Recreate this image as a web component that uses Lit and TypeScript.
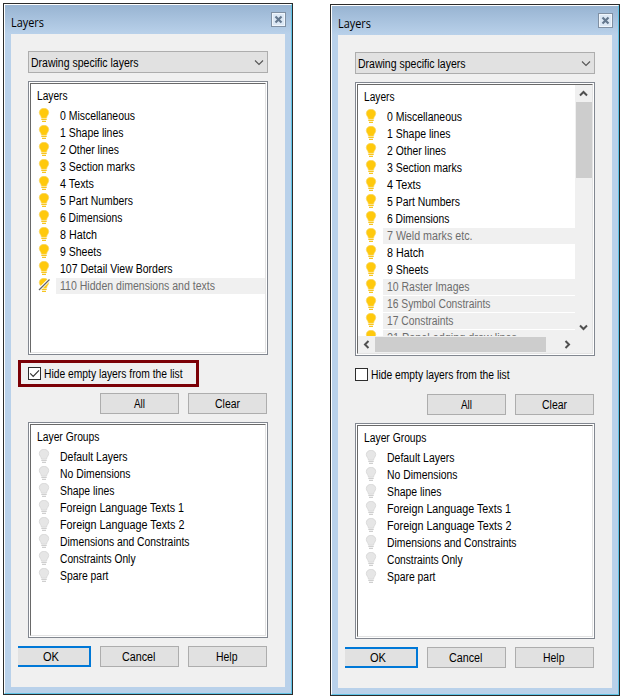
import { LitElement, html, css, svg, nothing } from "lit";
import { customElement, property } from "lit/decorators.js";

interface Row {
  label: string;
  width: number;
  empty?: boolean;
  struck?: boolean;
}

const BASE: Row[] = [
  { label: "0 Miscellaneous", width: 75 },
  { label: "1 Shape lines", width: 63.5 },
  { label: "2 Other lines", width: 59 },
  { label: "3 Section marks", width: 75 },
  { label: "4 Texts", width: 34 },
  { label: "5 Part Numbers", width: 73 },
  { label: "6 Dimensions", width: 62.5 },
];

const HATCH: Row = { label: "8 Hatch", width: 37 };
const SHEETS: Row = { label: "9 Sheets", width: 41.5 };

const FILTERED: Row[] = [
  ...BASE,
  HATCH,
  SHEETS,
  { label: "107 Detail View Borders", width: 112.5 },
  { label: "110 Hidden dimensions and texts", width: 155, empty: true, struck: true },
];

const ALL: Row[] = [
  ...BASE,
  { label: "7 Weld marks etc.", width: 85.5, empty: true },
  HATCH,
  SHEETS,
  { label: "10 Raster Images", width: 82.5, empty: true },
  { label: "16 Symbol Constraints", width: 103.5, empty: true },
  { label: "17 Constraints", width: 66.5, empty: true },
  { label: "21 Panel edging draw lines", width: 130, empty: true },
];

const GROUPS: Row[] = [
  { label: "Default Layers", width: 67.5 },
  { label: "No Dimensions", width: 70.5 },
  { label: "Shape lines", width: 54.5 },
  { label: "Foreign Language Texts 1", width: 124 },
  { label: "Foreign Language Texts 2", width: 124.5 },
  { label: "Dimensions and Constraints", width: 129.5 },
  { label: "Constraints Only", width: 75.5 },
  { label: "Spare part", width: 48.5 },
];

/* One line of narrow UI text, 16px high with its baseline at 12px. */
const line = (label: string, width: number) => html`
  <svg class="line" width=${width} height="16">
    <text x="0" y="12" textLength=${width} lengthAdjust="spacingAndGlyphs">${label}</text>
  </svg>
`;

const bulb = (on: boolean, struck = false) => html`
  <svg class="bulb" width="12" height="16" viewBox="0 0 12 16">
    <path
      d="M6 .3C3.200.3 1.300 2.200 1.300 4.600 1.300 6.800 3.200 7.700 3.500 10.200h5C8.800 7.700 10.700 6.800 10.700 4.600 10.700 2.200 8.800.3 6 .3Z"
      fill=${on ? "#ffc90c" : "#e6e6e6"}
      stroke=${on ? "#f8d660" : "#d3d3d3"}
      stroke-width=".7"
    />
    <path d="M3.300 11.500h5.400M4 13.400h4" stroke=${on ? "#f7c520" : "#cfcfcf"} stroke-width="1.200" />
    ${struck
      ? svg`<path d="M1 11.800 11 1.800" stroke="#fff" stroke-width="3.200"/><path d="M1 12 11.500 1.500" stroke="#666" stroke-width="1.300"/>`
      : nothing}
  </svg>
`;

@customElement("layer-dialog")
export class LayerDialog extends LitElement {
  @property({ type: Boolean }) filtered = false;

  static styles = css`
    :host {
      display: block;
      box-sizing: border-box;
      width: 290px;
      height: 692px;
      border: 1px solid #2b2b2b;
      font: 12px/16px "Liberation Sans", Arial, sans-serif;
      color: #000;
      white-space: nowrap;
    }
    * { box-sizing: border-box; }
    .frame {
      height: 690px;
      border: 1px solid #fff;
      border-right-color: #5fc3e6;
      border-bottom-color: #5fc3e6;
      padding: 0 6px 6px;
      background: linear-gradient(#98b4d2, #b9d1ea 29px);
    }
    .line { display: block; flex: none; overflow: visible; fill: currentColor; }
    .titlebar {
      display: flex;
      justify-content: space-between;
      height: 29px;
    }
    .title {
      font: 12px/16px "Open Sans", "Noto Sans", sans-serif;
      padding-top: 10px;
    }
    .close {
      width: 15px;
      height: 15px;
      margin: 7px -1px 0 0;
      border: 1px solid #8090a3;
      background: #dce8f5;
      box-shadow: inset 0 0 0 1px #f0f6fc;
    }
    .close svg { display: block; }
    .client {
      height: 653px;
      background: #f0f0f0;
      padding: 17px 17px 0;
    }
    .select {
      display: flex;
      justify-content: space-between;
      width: 240px;
      height: 22px;
      border: 1px solid #adadad;
      background: #e1e1e1;
      padding: 3px 3px 0 2px;
    }
    .chevron { display: block; margin-top: 4px; }
    .list {
      width: 240px;
      border: 1px solid #828790;
      background: #fff;
      padding: 1px;
      margin-top: 8px;
    }
    .inner {
      height: 100%;
      border: 1px solid #e3e3e3;
      border-top-color: #696969;
      border-left-color: #696969;
      display: grid;
      grid-template-rows: minmax(0, 1fr) auto;
      grid-template-columns: minmax(0, 1fr) auto;
    }
    .layers { height: 274px; }
    .groups { height: 216px; margin-top: 8px; }
    .view { overflow: hidden; }
    .heading { height: 24px; padding: 4px 0 0 6px; }
    .row { display: flex; height: 17px; }
    .bulb { display: block; flex: none; margin: 0 6px 0 7px; }
    .label { flex: 1; height: 16px; padding-left: 4px; }
    .empty { background: #f0f0f0; color: #6d6d6d; }
    .vbar { width: 17px; background: #f0f0f0; display: flex; flex-direction: column; }
    .vthumb { height: 76px; background: #cdcdcd; margin-left: 1px; }
    .vbar svg:last-child { margin-top: auto; }
    .hbar { grid-column: 1 / 3; height: 17px; background: #f0f0f0; display: flex; }
    .hthumb { width: 171px; margin: 1px 13px 1px 0; background: #cdcdcd; }
    .arrow { display: block; width: 17px; height: 17px; fill: none; stroke: #505050; stroke-width: 2; }
    .check {
      display: flex;
      width: 181px;
      height: 27px;
      margin: 5px 0 0 -10px;
      border: 3px solid transparent;
      padding: 3px 0 0 7px;
      gap: 2.500px;
    }
    .marked { border-color: #7b0006; }
    .box { flex: none; width: 13px; height: 13px; margin-top: 1px; border: 1px solid #2d2d2d; background: #fff; }
    .box svg { display: block; }
    .buttons { display: flex; justify-content: flex-end; gap: 9px; width: 239px; margin-top: 6px; }
    .footer { width: 249px; margin: 8px 0 0 -10px; }
    .button {
      display: flex;
      justify-content: center;
      width: 79px;
      height: 21px;
      border: 1px solid #adadad;
      background: #e1e1e1;
      padding: 2px 1px 0 0;
    }
    .ok { width: 73px; border: 2px solid #0078d7; border-left: 0; padding: 1px 5px 0 0; }
  `;

  private rows(rows: Row[], on: boolean) {
    return rows.map(
      (r) => html`<div class="row">
        ${bulb(on, r.struck)}
        <div class="label ${r.empty ? "empty" : ""}">${line(r.label, r.width)}</div>
      </div>`,
    );
  }

  render() {
    return html`
      <div class="frame">
        <div class="titlebar">
          <div class="title">${line("Layers", 33)}</div>
          <div class="close">
            <svg width="13" height="13" viewBox="0 0 13 13">
              <path d="m3.500 3.500 6 6m0-6-6 6" stroke="#64788f" stroke-width="2.200" />
            </svg>
          </div>
        </div>
        <div class="client">
          <div class="select">
            ${line("Drawing specific layers", 107.5)}
            <svg class="chevron" width="10" height="8" viewBox="0 0 10 8">
              <path d="m1 1.500 4 4 4-4" fill="none" stroke="#555" stroke-width="1.100" />
            </svg>
          </div>
          <div class="list layers">
            <div class="inner">
              <div class="view">
                <div class="heading">${line("Layers", 30.5)}</div>
                ${this.rows(this.filtered ? FILTERED : ALL, true)}
              </div>
              ${this.filtered
                ? nothing
                : html`<div class="vbar">
                      <svg class="arrow" viewBox="0 0 17 17"><path d="m5 10.500 3.500-3.500 3.500 3.500" /></svg>
                      <div class="vthumb"></div>
                      <svg class="arrow" viewBox="0 0 17 17"><path d="m5 6.500 3.500 3.500 3.500-3.500" /></svg>
                    </div>
                    <div class="hbar">
                      <svg class="arrow" viewBox="0 0 17 17"><path d="m10.500 5-3.500 3.500 3.500 3.500" /></svg>
                      <div class="hthumb"></div>
                      <svg class="arrow" viewBox="0 0 17 17"><path d="m6.500 5 3.500 3.500-3.500 3.500" /></svg>
                    </div>`}
            </div>
          </div>
          <div class="check ${this.filtered ? "marked" : ""}">
            <div class="box">
              ${this.filtered
                ? html`<svg width="11" height="11" viewBox="0 0 11 11">
                    <path d="m1.200 5.300 3 3 5.800-6" fill="none" stroke="#333" stroke-width="1.200" />
                  </svg>`
                : nothing}
            </div>
            ${line("Hide empty layers from the list", 138.5)}
          </div>
          <div class="buttons">
            <div class="button">${line("All", 11)}</div>
            <div class="button">${line("Clear", 25)}</div>
          </div>
          <div class="list groups">
            <div class="inner">
              <div class="view">
                <div class="heading">${line("Layer Groups", 62.5)}</div>
                ${this.rows(GROUPS, false)}
              </div>
            </div>
          </div>
          <div class="buttons footer">
            <div class="button ok">${line("OK", 16)}</div>
            <div class="button">${line("Cancel", 33.5)}</div>
            <div class="button">${line("Help", 21.5)}</div>
          </div>
        </div>
      </div>
    `;
  }
}

@customElement("app-root")
export class AppRoot extends LitElement {
  static styles = css`
    :host {
      display: flex;
      gap: 37px;
      box-sizing: border-box;
      width: 625px;
      height: 698px;
      padding: 3px;
      background: #fff;
    }
    .lower { margin-top: 1px; }
  `;

  render() {
    return html`
      <layer-dialog filtered></layer-dialog>
      <layer-dialog class="lower"></layer-dialog>
    `;
  }
}
